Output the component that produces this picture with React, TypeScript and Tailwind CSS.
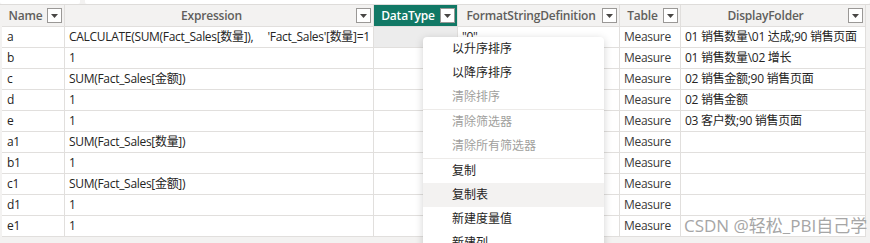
const columns = [
  { key: 'name', label: 'Name', width: 'w-[63px]' },
  { key: 'expr', label: 'Expression', width: 'w-[309px]' },
  { key: 'type', label: 'DataType', width: 'w-[84px]' },
  { key: 'fmt', label: 'FormatStringDefinition', width: 'w-[162px]' },
  { key: 'table', label: 'Table', width: 'w-[61px]' },
  { key: 'folder', label: 'DisplayFolder', width: 'w-[185px]' },
];

const rows = [
  { name: 'a', expr: "CALCULATE(SUM(Fact_Sales[数量]),     'Fact_Sales'[数量]=1 || 'Fact_Sales'[数量]=2)", fmt: '"0"', folder: '01 销售数量\\01 达成;90 销售页面' },
  { name: 'b', expr: '1', fmt: '', folder: '01 销售数量\\02 增长' },
  { name: 'c', expr: 'SUM(Fact_Sales[金额])', fmt: '', folder: '02 销售金额;90 销售页面' },
  { name: 'd', expr: '1', fmt: '', folder: '02 销售金额' },
  { name: 'e', expr: '1', fmt: '', folder: '03 客户数;90 销售页面' },
  { name: 'a1', expr: 'SUM(Fact_Sales[数量])', fmt: '', folder: '' },
  { name: 'b1', expr: '1', fmt: '', folder: '' },
  { name: 'c1', expr: 'SUM(Fact_Sales[金额])', fmt: '', folder: '' },
  { name: 'd1', expr: '1', fmt: '', folder: '' },
  { name: 'e1', expr: '1', fmt: '', folder: '' },
];

const menu = [
  { label: '以升序排序' },
  { label: '以降序排序' },
  { label: '清除排序', disabled: true, sep: true },
  { label: '清除筛选器', disabled: true },
  { label: '清除所有筛选器', disabled: true, sep: true },
  { label: '复制' },
  { label: '复制表', hover: true },
  { label: '新建度量值' },
  { label: '新建列' },
];

const FilterBox = () => (
  <div className="w-[15px] h-[15px] shrink-0 border border-[#9a9896] bg-white flex items-center justify-center">
    <svg width="7" height="4" viewBox="0 0 7 4">
      <path d="M0 0 H7 L3.5 4 Z" fill="#484644" />
    </svg>
  </div>
);

const App = () => (
  <div className="relative w-[870px] h-[243px] overflow-hidden bg-[#f3f2f1] font-['Segoe_UI','Open_Sans','Noto_Sans_CJK_SC',sans-serif] text-[12px] text-[#252423]">
    {/* top scroll strip */}
    <div className="h-[5px] flex gap-[5px] border-b border-[#dedcda]">
      <div className="w-[80px] h-[4px] bg-white rounded-b-[2px]" />
      <div className="flex-1 h-[4px] bg-white rounded-b-[2px]" />
    </div>

    <div className="ml-[2px] w-[864px] tracking-[-0.3px]">
      {/* header */}
      <div className="flex h-[22px] bg-[#f3f2f1] border-b border-[#e1dfdd] tracking-[-0.2px]">
        {columns.map((c) => (
          <div
            key={c.key}
            className={`${c.width} h-full flex items-center pl-[2px] pr-[2px] border-r border-[#e1dfdd] ${c.key === 'type' ? 'bg-[#117865] text-white' : 'text-[#605e5c]'}`}
          >
            <span className="flex-1 text-center font-semibold whitespace-nowrap overflow-hidden">{c.label}</span>
            <FilterBox />
          </div>
        ))}
      </div>

      {/* body */}
      {rows.map((r, i) => (
        <div key={r.name} className="flex h-[21px] bg-white border-b border-[#e1dfdd]">
          <div className="w-[63px] pl-[5px] flex items-center border-r border-[#e1dfdd]">{r.name}</div>
          <div className="w-[309px] pl-[4px] flex items-center border-r border-[#e1dfdd] whitespace-pre overflow-hidden">{r.expr}</div>
          <div className={`w-[84px] border-r border-[#e1dfdd] ${i === 0 ? 'bg-[#ececec]' : ''}`} />
          <div className="w-[162px] pl-[4px] flex items-center border-r border-[#e1dfdd] whitespace-nowrap overflow-hidden">{r.fmt}</div>
          <div className="w-[61px] pl-[4px] flex items-center border-r border-[#e1dfdd] text-[#3b3a39]">Measure</div>
          <div className="w-[185px] pl-[4px] flex items-center border-r border-[#e1dfdd] whitespace-nowrap overflow-hidden">{r.folder}</div>
        </div>
      ))}
    </div>

    {/* watermark */}
    <div className="absolute left-[684px] top-[214px] text-[17px] leading-[24px] whitespace-nowrap text-[#a6a6a6] font-['Microsoft_YaHei','Open_Sans','Noto_Sans_CJK_SC',sans-serif]">
      CSDN @轻松_PBI自己学
    </div>

    {/* context menu */}
    <div className="absolute left-[423px] top-[37px] w-[181px] bg-white rounded-[4px] shadow-[0_2px_8px_rgba(0,0,0,0.18)]">
      {menu.map((m) => (
        <div
          key={m.label}
          className={`h-[24px] pl-[29px] flex items-center ${m.sep ? 'border-b border-[#edebe9] h-[25px]' : ''} ${m.hover ? 'bg-[#f3f2f1]' : ''} ${m.disabled ? 'text-[#a19f9d]' : 'text-[#252423]'}`}
        >
          {m.label}
        </div>
      ))}
    </div>
  </div>
);

export default App;
